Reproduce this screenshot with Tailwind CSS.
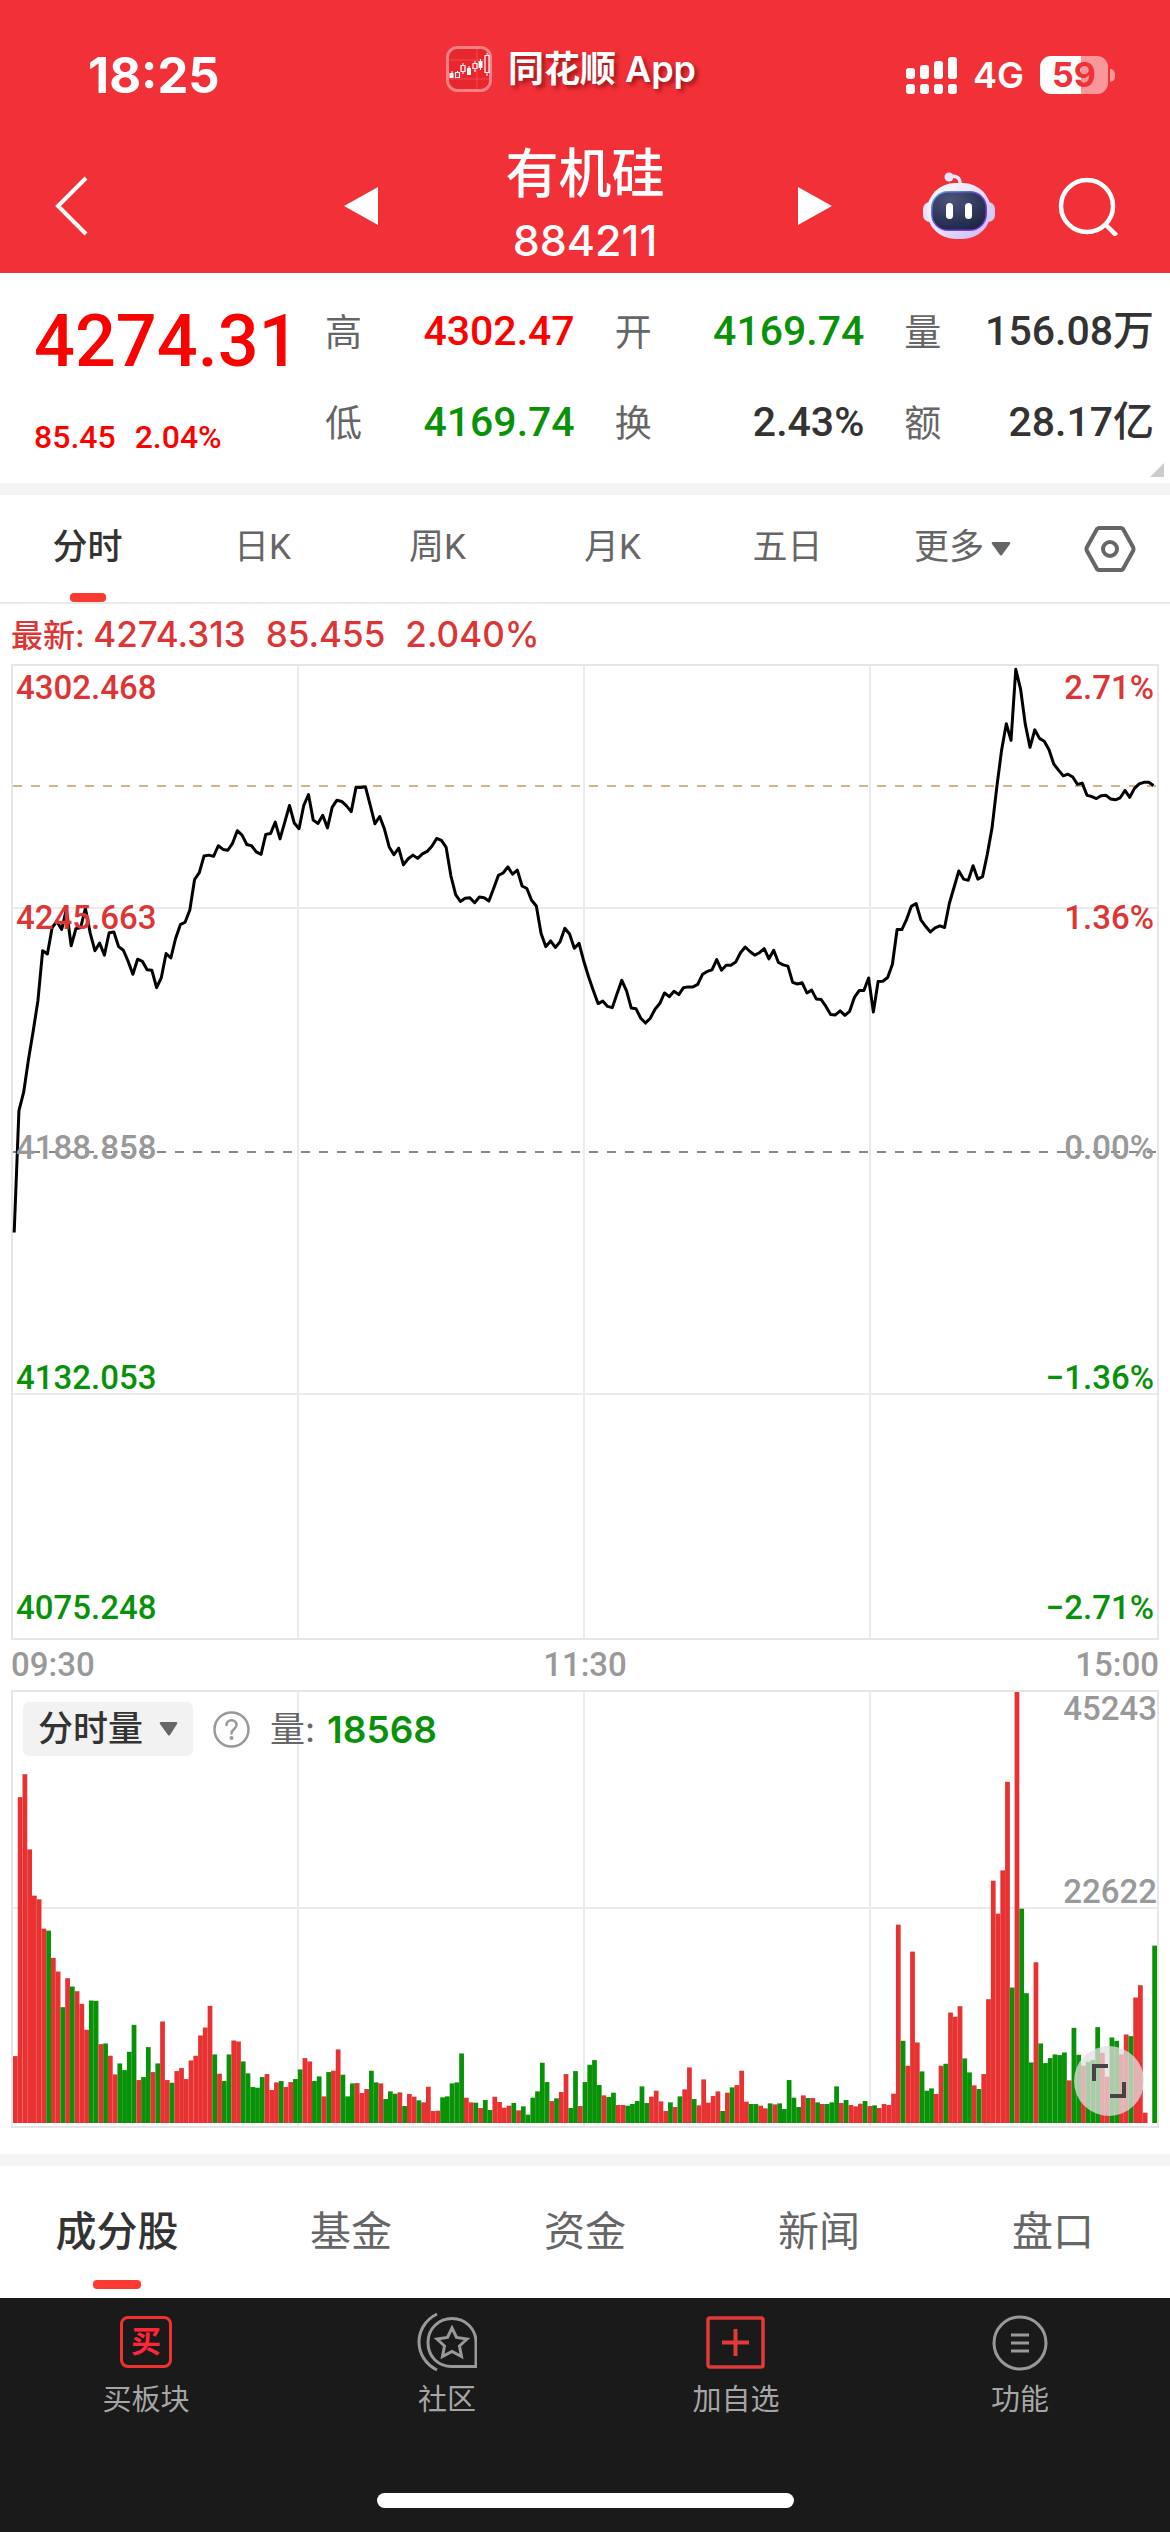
<!DOCTYPE html>
<html lang="zh-CN">

<head>
    <meta charset="UTF-8">
    <meta name="viewport" content="width=device-width, initial-scale=1.0">
    <title>有机硅 884211</title>
    <script src="https://cdn.jsdelivr.net/npm/@tailwindcss/browser@4"></script>
</head>

<body class="min-h-screen flex flex-col bg-white text-[#333] font-['Roboto','Noto_Sans_CJK_SC',sans-serif]">

    <!-- 顶部 -->
    <header class="bg-[#f23037] text-white">
        <div class="h-[140px] pt-[10px] grid grid-cols-3 items-center font-['Inter','Noto_Sans_CJK_SC',sans-serif]">
            <div class="pl-[88px] text-[49px] leading-none font-bold">18:25</div>
            <div class="pb-3 pr-7 flex items-center justify-center gap-4">
                <svg class="w-[46px] h-[46px]" viewBox="0 0 46 46" fill="none">
                    <rect x="1.5" y="1.5" width="43" height="43" rx="10" fill="#e8262d" stroke="#f98084" stroke-width="3" />
                    <path d="M3 14h40M3 33h40M31 3v40" stroke="#f04a4f" stroke-width="1" />
                    <path d="M6 25v6M11.500 25v7M17 17v11M23 20v9M29 15v11M34.500 13v11M41 7v23" stroke="#fff" stroke-width="1" />
                    <path d="M3.500 27h4v5h-4zM21 22h4v7h-4zM32.500 15h4v7h-4z" fill="#fff" />
                    <path d="M9.500 26.500h4v5h-4zM15 19.500h4v6h-4zM27 17.500h4v5h-4zM39 9.500h4v17h-4z" fill="#e8262d" stroke="#fff" stroke-width="1.200" />
                </svg>
                <span class="text-[36px] leading-none font-semibold [text-shadow:3px_3px_4px_rgba(90,0,0,0.55)]">同花顺 App</span>
            </div>
            <div class="pr-[55px] flex items-center justify-end gap-4">
                <svg class="w-[51px] h-[38px]" viewBox="0 0 51 38" fill="#fff">
                    <rect x="0" y="12" width="9" height="11" rx="3" />
                    <rect x="14" y="9" width="9" height="14" rx="3" />
                    <rect x="28" y="5" width="9" height="18" rx="3" />
                    <rect x="42" y="1" width="9" height="22" rx="3" />
                    <rect x="0" y="28" width="9" height="10" rx="3" />
                    <rect x="14" y="28" width="9" height="10" rx="3" />
                    <rect x="28" y="28" width="9" height="10" rx="3" />
                    <rect x="42" y="28" width="9" height="10" rx="3" />
                </svg>
                <span class="text-[36px] leading-none font-semibold">4G</span>
                <div class="flex items-center gap-[2px]">
                    <div class="w-[68px] h-[38px] rounded-[11px] bg-linear-to-r from-white from-60% to-[#f8989b] to-60% text-center text-[34px] leading-[38px] font-bold text-[#f23037]">59</div>
                    <div class="w-[5px] h-[13px] rounded-r-full bg-[#f8989b]"></div>
                </div>
            </div>
        </div>

        <nav class="h-[133px] pb-[2px] grid grid-cols-[1fr_494px_1fr] items-center">
            <a href="#" aria-label="返回" class="pl-[54px]">
                <svg class="w-[34px] h-[60px]" viewBox="0 0 34 60" fill="none" stroke="#fff" stroke-width="4">
                    <path d="M32 2L4 30l28 28" />
                </svg>
            </a>
            <div class="flex items-center justify-between pl-[6px]">
                <button aria-label="上一个">
                    <svg class="w-[34px] h-[38px]" viewBox="0 0 34 38" fill="#fff"><path d="M34 0v38L0 19z" /></svg>
                </button>
                <div class="pr-[6px] text-center">
                    <h1 class="text-[53px] leading-[68px] font-medium">有机硅</h1>
                    <p class="text-[43px] leading-[62px] font-medium font-['Inter',sans-serif]">884211</p>
                </div>
                <button aria-label="下一个">
                    <svg class="w-[34px] h-[38px]" viewBox="0 0 34 38" fill="#fff"><path d="M0 0v38l34-19z" /></svg>
                </button>
            </div>
            <div class="flex items-center justify-end gap-[62px] pr-[52px]">
                <button aria-label="智能助手">
                    <svg class="w-[74px] h-[68px]" viewBox="0 0 74 68" fill="none">
                        <defs>
                            <linearGradient id="shell" x1="0" y1="0" x2="1" y2="1">
                                <stop offset="0" stop-color="#fff" />
                                <stop offset="0.550" stop-color="#e6defa" />
                                <stop offset="1" stop-color="#c3b6f2" />
                            </linearGradient>
                            <linearGradient id="visor" x1="0" y1="0" x2="1" y2="1">
                                <stop offset="0" stop-color="#5fb0e8" />
                                <stop offset="0.500" stop-color="#6a3fe0" />
                                <stop offset="1" stop-color="#8a35ea" />
                            </linearGradient>
                            <radialGradient id="glass" cx="0.350" cy="0.200" r="0.900">
                                <stop offset="0" stop-color="#4b5478" />
                                <stop offset="1" stop-color="#1c2444" />
                            </radialGradient>
                        </defs>
                        <path d="M27 5c6-2 12 0 11 8" stroke="#eee6fb" stroke-width="3.500" stroke-linecap="round" />
                        <circle cx="27" cy="5" r="4.500" fill="#ece4fa" />
                        <rect x="1" y="30" width="16" height="20" rx="7" fill="#e9e4fb" />
                        <rect x="57" y="30" width="16" height="20" rx="7" fill="#d5caf5" />
                        <rect x="5" y="11" width="64" height="56" rx="28" fill="url(#shell)" />
                        <rect x="9" y="19" width="56" height="40" rx="17" fill="url(#visor)" />
                        <rect x="10.500" y="20.500" width="53" height="37" rx="15.500" fill="url(#glass)" />
                        <rect x="24" y="31" width="7" height="16" rx="3.500" fill="#fff" />
                        <rect x="43" y="31" width="7" height="16" rx="3.500" fill="#fff" />
                    </svg>
                </button>
                <button aria-label="搜索">
                    <svg class="w-[60px] h-[60px]" viewBox="0 0 60 60" fill="none" stroke="#fff" stroke-width="4.500">
                        <circle cx="29" cy="30" r="26" />
                        <path d="M47.500 48.500l11 11" />
                    </svg>
                </button>
            </div>
        </nav>
    </header>

    <!-- 行情 -->
    <section class="relative flex border-b-[12px] border-[#f4f4f4]">
        <div class="w-[325px] pt-6 pl-[34px] text-[#fa0200]">
            <p class="text-[72px] leading-[90px] font-medium">4274.31</p>
            <p class="mt-[30px] mb-[26px] flex gap-[19px] text-[32px] leading-[40px] font-medium"><span>85.45</span><span>2.04%</span></p>
        </div>
        <dl class="flex-1 grid grid-cols-3 content-start gap-x-10 gap-y-[29px] pt-[30px] pr-4 text-[41px] leading-[56px] font-medium">
            <div class="flex justify-between"><dt class="text-[37px] leading-[62px] font-normal text-[#666]">高</dt><dd class="text-[#fa0200]">4302.47</dd></div>
            <div class="flex justify-between"><dt class="text-[37px] leading-[62px] font-normal text-[#666]">开</dt><dd class="text-[#099109]">4169.74</dd></div>
            <div class="flex justify-between"><dt class="text-[37px] leading-[62px] font-normal text-[#666]">量</dt><dd>156.08万</dd></div>
            <div class="flex justify-between"><dt class="text-[37px] leading-[62px] font-normal text-[#666]">低</dt><dd class="text-[#099109]">4169.74</dd></div>
            <div class="flex justify-between"><dt class="text-[37px] leading-[62px] font-normal text-[#666]">换</dt><dd>2.43%</dd></div>
            <div class="flex justify-between"><dt class="text-[37px] leading-[62px] font-normal text-[#666]">额</dt><dd>28.17亿</dd></div>
        </dl>
        <svg class="absolute right-[6px] bottom-[6px] w-[14px] h-[14px]" viewBox="0 0 14 14" fill="#ccc"><path d="M14 0v14H0z" /></svg>
    </section>

    <!-- 周期 -->
    <nav class="h-[109px] flex border-b-2 border-[#ebebeb] text-[35px] text-[#666]">
        <button class="flex-1 h-full flex flex-col items-center font-medium text-[#333]">
            <span class="flex-1 flex items-center pt-[9px]">分时</span>
            <span class="w-9 h-[9px] rounded-[4px] bg-[#fb3a32]"></span>
        </button>
        <button class="flex-1">日K</button>
        <button class="flex-1">周K</button>
        <button class="flex-1">月K</button>
        <button class="flex-1">五日</button>
        <button class="flex-1 flex items-center justify-center gap-[7px]">更多
            <svg class="w-5 h-[14px]" viewBox="0 0 20 14" fill="#666"><path d="M2 0h16q2 0 1 2l-8 11q-1 1-2 0L1 2Q0 0 2 0z" /></svg>
        </button>
        <button aria-label="设置" class="w-[120px] flex items-center justify-center">
            <svg class="w-[52px] h-[46px]" viewBox="0 0 52 46" fill="none" stroke="#666" stroke-width="4">
                <path d="M15 2h22q1 0 2 1l10 18q1 2 0 4L39 43q-1 1-2 1H15q-1 0-2-1L3 25q-1-2 0-4L13 3q1-1 2-1z" />
                <circle cx="26" cy="23" r="7" />
            </svg>
        </button>
    </nav>

    <main class="px-[11px]">
        <p class="h-[60px] flex items-center gap-5 whitespace-pre text-[35px] font-medium text-[#dd3535] font-['Inter','Noto_Sans_CJK_SC',sans-serif]"><span><span class="text-[32px]">最新: </span>4274.313</span><span>85.455</span><span>2.040%</span></p>

        <!-- 分时图 -->
        <div class="relative h-[976px] border-2 border-[#e6e6e6]">
            <div class="absolute inset-0 grid grid-cols-4 divide-x-2 divide-[#ebebeb]">
                <div></div>
                <div></div>
                <div></div>
                <div></div>
            </div>
            <div class="absolute inset-0 grid grid-rows-4">
                <div class="border-b-2 border-[#ebebeb]"></div>
                <div></div>
                <div class="border-b-2 border-[#ebebeb]"></div>
                <div></div>
            </div>
            <svg id="priceChart" class="absolute inset-0 w-full h-full overflow-visible" viewBox="0 62 241 2390" preserveAspectRatio="none" fill="none">
                <path d="M0 357H241" stroke="#d0b48c" stroke-width="2" stroke-dasharray="9 9" vector-effect="non-scaling-stroke" />
                <path d="M0 1257H241" stroke="#888" stroke-width="2" stroke-dasharray="9 9" vector-effect="non-scaling-stroke" />
                <polyline id="priceLine" stroke="#000" stroke-width="3" stroke-linejoin="round" vector-effect="non-scaling-stroke" />
            </svg>
            <div class="relative h-[962px] px-[3px] pt-[2px] flex flex-col justify-between text-[33px] leading-[40px] font-medium">
                <div class="flex justify-between text-[#dd3535]"><span>4302.468</span><span>2.71%</span></div>
                <div class="flex justify-between text-[#dd3535]"><span>4245.663</span><span>1.36%</span></div>
                <div class="flex justify-between text-[#999]"><span>4188.858</span><span>0.00%</span></div>
                <div class="flex justify-between text-[#099109]"><span>4132.053</span><span>−1.36%</span></div>
                <div class="flex justify-between text-[#099109]"><span>4075.248</span><span>−2.71%</span></div>
            </div>
        </div>
        <div class="h-[50px] pb-[2px] flex items-center justify-between text-[33px] leading-none font-medium text-[#999]">
            <span>09:30</span><span>11:30</span><span>15:00</span>
        </div>

        <!-- 成交量 -->
        <div class="relative h-[438px] border-2 border-[#e6e6e6]">
            <div class="absolute inset-0 grid grid-cols-4 divide-x-2 divide-[#ebebeb]">
                <div></div>
                <div></div>
                <div></div>
                <div></div>
            </div>
            <div class="absolute inset-0 grid grid-rows-2">
                <div class="border-b-2 border-[#ebebeb]"></div>
                <div></div>
            </div>
            <div class="absolute inset-0 pb-[3px]">
                <svg id="volumeChart" class="w-full h-full" viewBox="0 94 241 1295" preserveAspectRatio="none"></svg>
            </div>
            <div class="relative flex items-center pl-[10px] pt-[10px]">
                <button class="w-[170px] h-[54px] rounded-md bg-[#f2f2f2] flex items-center justify-center gap-4 text-[35px] leading-none font-medium">分时量
                    <svg class="w-[19px] h-[14px]" viewBox="0 0 19 14" fill="#666"><path d="M2 0h15q2 0 1 2l-7 11q-1 1-2 0L1 2Q0 0 2 0z" /></svg>
                </button>
                <button aria-label="说明" class="ml-5">
                    <svg class="w-[37px] h-[37px]" viewBox="0 0 37 37" fill="none" stroke="#999" stroke-width="2.500" stroke-linecap="round">
                        <circle cx="18.500" cy="18.500" r="17" />
                        <path d="M13.500 14c0-6.500 10-6.500 10 0 0 4-5 4-5 8.500" />
                        <circle cx="18.500" cy="27" r="0.800" fill="#999" />
                    </svg>
                </button>
                <p class="ml-5 flex items-center text-[37px] leading-none font-['Inter','Noto_Sans_CJK_SC',sans-serif]"><span class="text-[35px] text-[#666]">量:</span><span class="ml-3 font-semibold text-[#099109]">18568</span></p>
            </div>
            <span class="absolute right-0 top-0 text-[33px] leading-[34px] font-medium text-[#999]">45243</span>
            <span class="absolute right-0 bottom-[50%] text-[33px] leading-[34px] font-medium text-[#999]">22622</span>
            <button aria-label="全屏" class="absolute right-[13px] bottom-[10px] w-[70px] h-[70px] rounded-full bg-[#e2dfdf]/75 flex items-center justify-center">
                <svg class="w-[36px] h-[36px]" viewBox="0 0 36 36" fill="none" stroke="#444" stroke-width="4">
                    <path d="M3 18V3h14M33 19v14H19" />
                </svg>
            </button>
        </div>
    </main>

    <!-- 板块内容 -->
    <nav class="mt-[26px] h-[144px] border-t-[12px] border-[#f4f4f4] flex text-[41px] text-[#666]">
        <button class="flex-1 h-full flex flex-col items-center font-medium text-[#333]">
            <span class="flex-1 flex items-center pt-[20px]">成分股</span>
            <span class="w-12 h-[9px] mb-[9px] rounded-[4px] bg-[#fb3a32]"></span>
        </button>
        <button class="flex-1 pt-[2px]">基金</button>
        <button class="flex-1 pt-[2px]">资金</button>
        <button class="flex-1 pt-[2px]">新闻</button>
        <button class="flex-1 pt-[2px]">盘口</button>
    </nav>

    <!-- 底部栏 -->
    <footer class="grow bg-[#1a1a1a] text-[#a6a6a6] flex flex-col justify-between">
        <div class="pt-[14px] grid grid-cols-[292fr_310fr_268fr_300fr] text-[29px] leading-[42px]">
            <button class="flex flex-col items-center gap-[7px]">
                <span class="h-[60px] flex items-center"><span class="w-[52px] h-[52px] rounded-lg border-[3px] border-[#f0322f] flex items-center justify-center text-[30px] leading-none font-bold text-[#ff2638]">买</span></span>
                买板块
            </button>
            <button class="flex flex-col items-center gap-[7px]">
                <svg class="w-[60px] h-[60px]" viewBox="0 0 60 60" fill="none" stroke="#999" stroke-width="3">
                    <path d="M35 6.500c-13 0-24 10-24 24s10 24 24 24h24v-24c0-14-11-24-24-24z" />
                    <path d="M20 2C-4 14-4 46 20 58" />
                    <path d="M35 16l4.500 9.500 10.500 1.500-7.500 7 2 10.500-9.500-5-9.500 5 2-10.500-7.500-7 10.500-1.500z" />
                </svg>
                社区
            </button>
            <button class="flex flex-col items-center gap-[7px]">
                <svg class="w-[60px] h-[60px]" viewBox="0 0 60 60" fill="none" stroke="#e03a3a" stroke-width="3.500">
                    <rect x="2" y="6" width="55" height="49" rx="2" />
                    <path d="M16 30.500h27M29.500 17v27" stroke-width="4" />
                </svg>
                加自选
            </button>
            <button class="flex flex-col items-center gap-[7px]">
                <svg class="w-[60px] h-[60px]" viewBox="0 0 60 60" fill="none" stroke="#999" stroke-width="3">
                    <circle cx="30" cy="31" r="26" />
                    <path d="M21 23h18M21 31h18M21 39h18" />
                </svg>
                功能
            </button>
        </div>
        <div class="w-[417px] h-[15px] mb-6 mx-auto rounded-full bg-white"></div>
    </footer>

    <script>
        // 每分钟价格，数值为距顶部刻度
        const prices = [
            1455, 1155, 1110, 1030, 960, 885, 762, 770, 705, 690, 710, 660, 750, 708, 705, 658, 718, 762, 743, 773,
            718, 716, 752, 761, 788, 820, 783, 788, 809, 810, 853, 828, 769, 780, 732, 698, 692, 662, 587, 570,
            529, 527, 530, 504, 513, 515, 498, 467, 478, 501, 504, 519, 525, 476, 474, 446, 487, 446, 405, 448,
            462, 405, 378, 441, 449, 429, 460, 409, 392, 395, 406, 420, 361, 361, 359, 404, 450, 432, 463, 507,
            526, 510, 551, 536, 527, 535, 524, 518, 505, 486, 491, 508, 578, 624, 641, 633, 632, 644, 630, 632,
            640, 609, 577, 571, 556, 574, 564, 603, 609, 638, 652, 720, 752, 738, 754, 740, 707, 721, 756, 744,
            788, 826, 860, 892, 886, 899, 902, 868, 835, 861, 903, 905, 928, 940, 928, 906, 892, 866, 875, 862,
            870, 853, 851, 851, 845, 820, 813, 809, 784, 810, 798, 798, 790, 767, 753, 764, 773, 767, 757, 782,
            761, 791, 797, 800, 840, 844, 841, 866, 859, 881, 882, 899, 919, 920, 910, 921, 911, 877, 860, 860,
            829, 913, 838, 837, 828, 796, 710, 710, 685, 653, 646, 686, 702, 716, 706, 701, 705, 646, 606, 566,
            586, 589, 553, 586, 580, 525, 460, 360, 270, 204, 245, 70, 118, 205, 262, 219, 240, 247, 268, 303,
            318, 332, 328, 335, 353, 350, 380, 383, 388, 381, 380, 389, 391, 386, 368, 385, 363, 352, 348, 348,
            356
        ];

        // 每分钟成交量柱顶刻度，负数为绿柱
        const VOLUME_BASE = 1389;
        const volumes = [
            1188, 410, 341, 567, 706, 717, 805, -811, 893, 934, -1041, 954, -979, 993, 1031, 1109, -1021, -1022, 1152, -1150,
            1187, 1243, -1210, -1230, -1175, -1094, 1260, -1251, -1161, 1236, -1210, 1084, 1260, -1268, 1233, 1224, 1257, 1201, 1187, 1126,
            1102, 1037, -1183, 1241, -1263, -1183, 1141, 1144, -1204, -1240, -1281, -1283, -1251, 1242, 1290, 1267, -1263, 1281, 1266, -1257,
            -1228, 1194, 1204, -1263, -1249, 1309, -1236, 1232, 1168, -1244, -1309, -1270, 1269, 1299, 1287, -1232, -1267, 1270, -1317, -1294,
            -1301, 1297, -1338, 1302, 1310, -1321, 1327, 1280, 1353, 1352, -1312, -1309, -1270, -1267, -1180, 1313, 1327, -1328, 1344, -1320,
            -1350, 1310, 1326, 1343, 1337, -1329, 1351, -1339, -1364, -1313, -1294, -1208, -1266, 1323, -1315, 1296, 1242, -1344, -1233, 1338,
            -1266, -1214, -1200, -1275, 1306, -1311, -1298, 1335, 1335, -1337, -1332, -1323, -1279, -1329, 1310, 1292, 1324, 1353, -1327, 1341,
            -1309, 1288, 1222, -1317, 1336, 1258, 1328, 1308, 1294, -1353, 1298, -1282, 1275, 1232, 1325, -1332, -1332, 1337, 1345, -1330,
            1333, -1330, -1347, -1260, -1313, -1341, 1306, -1314, 1314, -1327, 1332, -1332, -1327, -1279, 1329, -1320, 1335, 1339, 1331, -1323,
            1338, -1336, 1344, 1332, 1335, 1301, 793, -1142, 1217, 874, 1147, -1234, -1292, -1285, 1302, 1217, -1211, 1057, 1070, 1038,
            -1195, -1237, 1276, -1287, 1242, 1017, 661, 760, 630, 364, -982, 94, -745, -999, -1207, 906, -1150, -1209, -1194, -1183,
            -1185, -1177, 1261, -1103, -1184, 1217, -1205, -1200, -1101, 1178, 1250, -1132, -1142, 1183, 1123, -1128, 1012, 975, 1358, 1389,
            -856
        ];

        document.getElementById("priceLine").setAttribute("points", prices.map((p, i) => `${i + 0.25},${p}`).join(" "));

        const volumeChart = document.getElementById("volumeChart");
        volumes.forEach((v, i) => {
            const top = Math.abs(v);
            const bar = document.createElementNS("http://www.w3.org/2000/svg", "rect");
            bar.setAttribute("x", i);
            bar.setAttribute("y", top);
            bar.setAttribute("width", 1);
            bar.setAttribute("height", VOLUME_BASE - top);
            bar.setAttribute("fill", v < 0 ? "#079207" : "#e83232");
            volumeChart.appendChild(bar);
        });
    </script>
</body>

</html>
